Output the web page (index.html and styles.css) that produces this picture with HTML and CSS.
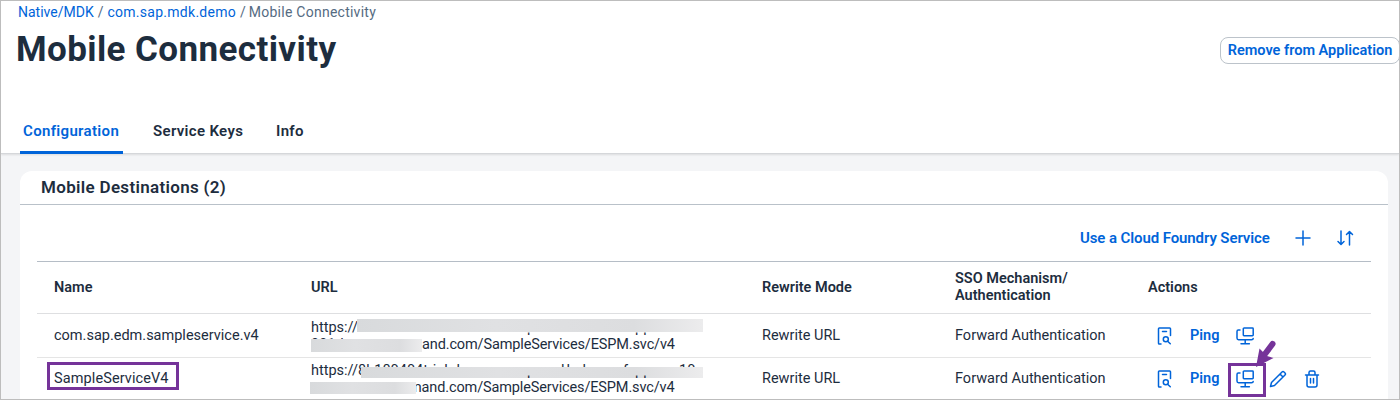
FILE: index.html
```html
<!DOCTYPE html>
<html lang="en">
<head>
<meta charset="utf-8">
<title>Mobile Connectivity</title>
<link rel="stylesheet" href="styles.css">
</head>
<body>
<svg class="sprite" aria-hidden="true">
  <symbol id="inspect" viewBox="0 0 16 18"><path d="M4 17H2.300Q1.500 17 1.500 16.200V1.800Q1.500 1 2.300 1H12.700Q13.500 1 13.500 1.800V8.500M5.500 4.500H9.500M10.600 14.200L13.300 16.800"/><circle cx="8.800" cy="12.200" r="2.500"/></symbol>
  <symbol id="screens" viewBox="0 0 18 18"><path d="M8 1H16.500Q17.200 1 17.200 1.700V8Q17.200 8.700 16.500 8.700H8Q7.300 8.700 7.300 8V1.700Q7.300 1 8 1M4 3H2.300Q1 3 1 4.500V11Q1 12.700 2.500 12.700H15.500Q17.200 12.700 17.200 11.500M9.200 13V16.800M5 16.800H13.400"/></symbol>
  <symbol id="edit" viewBox="0 0 18 18"><path d="M1.500 16.500L2.500 12.500L13 2Q14 1 15 2L16 3Q17 4 16 5L5.500 15.500ZM11 4L14 7"/></symbol>
  <symbol id="trash" viewBox="0 0 16 18"><path d="M1.500 5H14.500M5 5V2.500Q5 1 6.500 1H9.500Q11 1 11 2.500V5M3 5V15Q3 17 5 17H11Q13 17 13 15V5M6.500 8.500V13M9.500 8.500V13"/></symbol>
</svg>
<div class="page">
  <header class="header">
    <nav class="crumbs"><a class="link">Native/MDK</a><span>/</span><a class="link link-app">com.sap.mdk.demo</a><span>/</span><span class="here">Mobile Connectivity</span></nav>
    <div class="title-row">
      <h1 class="title">Mobile Connectivity</h1>
      <button class="remove">Remove from Application</button>
    </div>
    <div class="tabs">
      <div class="tab active">Configuration</div>
      <div class="tab keys">Service Keys</div>
      <div class="tab info">Info</div>
    </div>
  </header>
  <main class="card">
    <h2 class="card-title">Mobile Destinations (2)</h2>
    <div class="content">
      <div class="toolbar">
        <span class="foundry">Use a Cloud Foundry Service</span>
        <svg class="plus" viewBox="0 0 16 16"><path d="M8 1V15M1 8H15"/></svg>
        <svg class="sort" viewBox="0 0 18 16"><path d="M5 1V14M2 11.500L5 14.500L8 11.500M13.500 15V2M10.500 4.500L13.500 1.500L16.500 4.500"/></svg>
      </div>
      <div class="row head">
        <div class="h-name">Name</div><div class="h-url">URL</div><div class="h-mode">Rewrite Mode</div>
        <div class="h-stack"><div>SSO Mechanism/</div><div>Authentication</div></div><div class="h-actions">Actions</div>
      </div>
      <div class="row first">
        <div class="name">com.sap.edm.sampleservice.v4</div>
        <div class="url"><div>https://8</div><div class="tail"><span class="lead">001d</span><span class="path">and.com/SampleServices/ESPM.svc/v4</span></div><i class="mask top"></i><i class="mask low"></i><i class="descender p1">p</i><i class="descender p2">pp</i></div>
        <div class="mode">Rewrite URL</div>
        <div class="auth">Forward Authentication</div>
        <div class="actions"><svg class="i-inspect"><use href="#inspect"/></svg><span class="ping">Ping</span><svg class="i-screens"><use href="#screens"/></svg></div>
      </div>
      <div class="row second">
        <div class="name sample"><span class="outlined">SampleServiceV4</span></div>
        <div class="url"><div>https://8b180404trial-d</div><div class="tail"><span class="lead"></span><span class="path path-m">mand.com/SampleServices/ESPM.svc/v4</span></div><i class="ascender a1">ll d</i><i class="ascender a2">f</i><i class="ascender a3">10</i><i class="mask top"></i><i class="mask low"></i><i class="descender p1">p</i><i class="descender p2">pp</i></div>
        <div class="mode">Rewrite URL</div>
        <div class="auth">Forward Authentication</div>
        <div class="actions"><svg class="i-inspect"><use href="#inspect"/></svg><span class="ping">Ping</span><span class="focus"><svg class="i-screens"><use href="#screens"/></svg><svg class="arrow" viewBox="0 0 22 28"><path class="shaft" d="M17.500 4L10 14"/><path class="point" d="M1 27L4.500 8.500L9 13L12 16L18.500 18Z"/></svg></span><svg class="i-edit"><use href="#edit"/></svg><svg class="i-trash"><use href="#trash"/></svg></div>
      </div>
    </div>
  </main>
</div>
</body>
</html>
```
FILE: styles.css
```css
* { box-sizing: border-box; }
body { margin: 0; font-family: Roboto, "Liberation Sans", sans-serif; font-size: 14px; color: #1d2d3e; }
.sprite { display: none; }
svg { fill: none; stroke: #0064d9; stroke-width: 1.5; stroke-linecap: round; stroke-linejoin: round; flex: none; display: block; }
.page { width: 1400px; height: 400px; border: 1px solid #bdbdbd; background: #f4f5f7; overflow: hidden; }
.header { height: 153px; background: #fff; border-bottom: 1px solid #d5d7da; box-shadow: 0 1px 2px #0000001a; display: flex; flex-direction: column; }
.crumbs { height: 22px; padding-left: 17px; display: flex; align-items: center; gap: 4px; line-height: 20px; color: #556b82; white-space: nowrap; }
.link { color: #0064d9; }
.link-app { letter-spacing: .27px; }
.here { letter-spacing: .25px; margin-left: -1px; }
.title-row { height: 52px; display: flex; justify-content: space-between; align-items: center; padding-left: 15px; }
.title { margin: 1px 0 0; font-size: 35px; line-height: 44px; font-weight: 700; letter-spacing: .4px; }
.remove { width: 180px; height: 27px; margin-right: -1px; margin-top: 2px; padding: 0; border: 1px solid #bcc3ca; border-radius: 8px; background: #fff; color: #0064d9; font: 600 14.500px Roboto, sans-serif; white-space: nowrap; }
.tabs { display: flex; margin-top: auto; height: 47px; padding-left: 19px; font-weight: 600; font-size: 15px; line-height: 50px; letter-spacing: .33px; }
.tab { white-space: nowrap; }
.active { width: 103px; padding-left: 3px; color: #0064d9; border-bottom: 3px solid #0064d9; border-radius: 2px 2px 0 0; margin-bottom: -1px; }
.keys { width: 123px; padding-left: 30px; }
.info { padding-left: 30px; }
.card { width: 1368px; height: 240px; margin: 17px 0 0 19px; background: #fff; border-radius: 12px 12px 0 0; }
.card-title { margin: 0; height: 34px; border-bottom: 1px solid #b9c1c9; padding-left: 21px; font-size: 17px; line-height: 33px; font-weight: 600; letter-spacing: .32px; }
.content { margin: 0 17px; }
.toolbar { height: 56px; display: flex; align-items: center; padding: 10px 17px 0 1043px; color: #0064d9; font-weight: 600; font-size: 15px; white-space: nowrap; }
.foundry { width: 215px; letter-spacing: -.1px; }
.plus { width: 16px; height: 16px; }
.sort { width: 18px; height: 16px; margin-left: auto; }
.row { display: grid; grid-template-columns: 257px 451px 193px 193px 1fr; padding-left: 17px; align-items: center; line-height: 17px; font-size: 14.500px; white-space: nowrap; }
.head { height: 53px; border-top: 1px solid #b5bdc6; border-bottom: 1px solid #dedfe1; font-weight: 600; }
.h-stack { margin-top: -2px; }
.first { height: 44px; border-bottom: 1px solid #e5e5e5; }
.second { height: 41px; }
.url { position: relative; }
.tail { display: flex; }
.lead { width: 111px; }
.path { letter-spacing: -.13px; }
.path-m { margin-left: -13px; }
.mask { position: absolute; background: linear-gradient(90deg, #d8dadc, #e0e1e3 40%, #dcdddf 80%, #ececed); }
.top { left: 46px; top: 0; width: 346px; height: 13px; }
.low { left: 0; top: 20px; width: 111px; height: 13px; }
.second .top { left: 50px; top: 5px; width: 342px; height: 11px; }
.second .low { left: -1px; width: 106px; height: 12px; }
.descender { position: absolute; font-style: normal; top: 0; clip-path: inset(14px 0 0 0); }
.ascender { position: absolute; font-style: normal; top: 0; }
.a1 { left: 250px; letter-spacing: 2px; }
.a2 { left: 312px; }
.a3 { left: 368px; }
.p1 { left: 216px; }
.p2 { left: 324px; }
.actions { display: flex; align-items: center; padding-left: 9px; height: 33px; }
.i-inspect { width: 16px; height: 18px; }
.ping { width: 46px; margin-left: 17px; color: #0064d9; font-weight: 600; }
.i-screens { width: 18px; height: 18px; }
.sample { letter-spacing: .1px; }
.outlined { display: flex; align-items: center; width: 132px; height: 28px; border: 3px solid #753399; margin-left: -7px; padding: 4px 0 0 4px; margin-top: -5px; }
.focus { position: relative; display: flex; align-items: center; width: 38px; height: 34px; margin: 2px 0 0 -8px; border: 3px solid #753399; padding: 0 0 2px 5px; }
.arrow { position: absolute; left: 24px; top: -26px; width: 22px; height: 28px; stroke: #753399; }
.shaft { stroke-width: 6; }
.point { fill: #753399; stroke-width: 0; }
.i-edit { width: 18px; height: 18px; margin-left: 3px; }
.i-trash { width: 16px; height: 18px; margin-left: 17px; }
```
